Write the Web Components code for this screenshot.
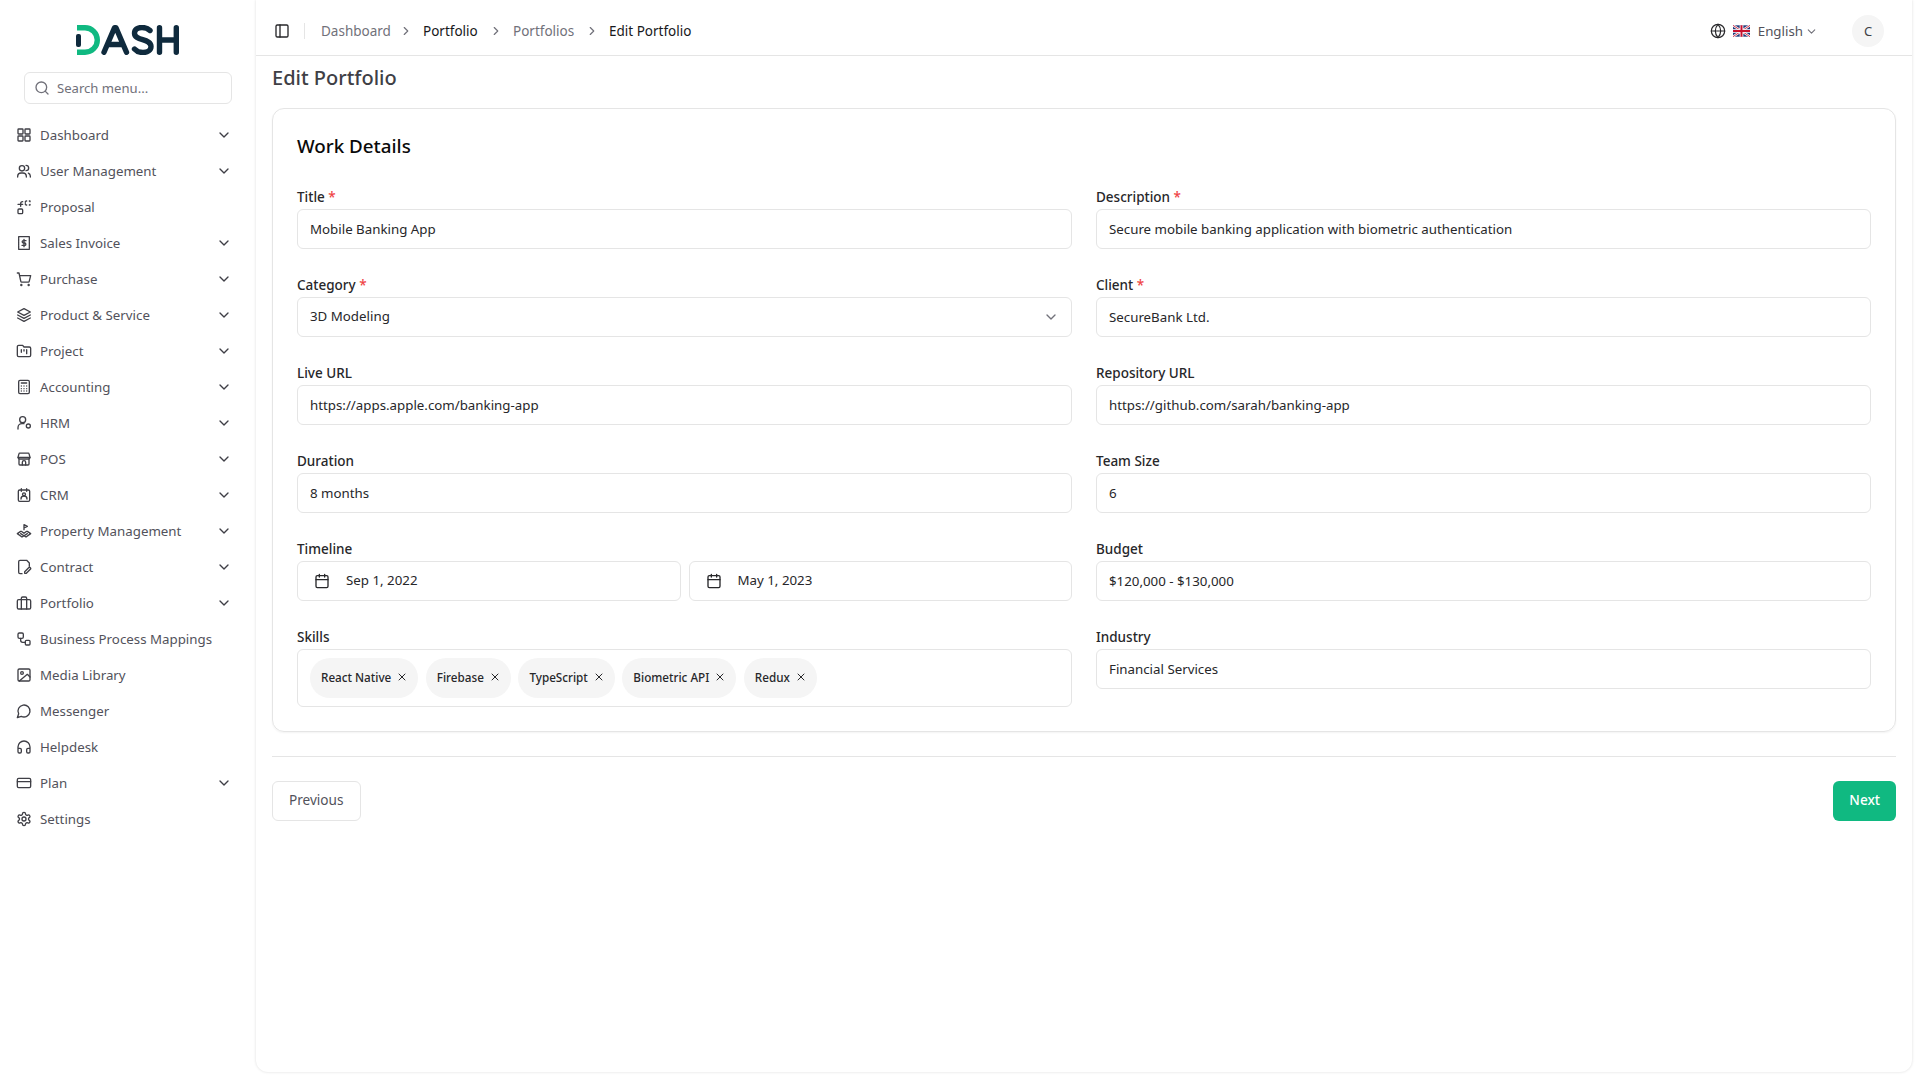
<!DOCTYPE html>
<html>
<head>
<meta charset="utf-8">
<title>Edit Portfolio</title>
<style>
  html, body { margin: 0; height: 100%; background: #fff; }
  body { font-family: "Noto Sans", "Open Sans", sans-serif; font-size: 13.3px; color: #0a0a0a; }
</style>
</head>
<body>
<app-shell>
  <side-bar slot="side"></side-bar>
  <top-bar slot="top"></top-bar>
  <edit-form></edit-form>
</app-shell>

<script>
const ICONS = {
  dashboard: '<rect x="3" y="3" width="7.5" height="7.5" rx="1"/><rect x="13.5" y="3" width="7.5" height="7.5" rx="1"/><rect x="3" y="13.5" width="7.5" height="7.5" rx="1"/><rect x="13.5" y="13.5" width="7.5" height="7.5" rx="1"/>',
  users: '<circle cx="9" cy="8" r="4"/><path d="M2.5 21v-1.5A5 5 0 0 1 7.5 15h3a5 5 0 0 1 5 4.5V21"/><path d="M15 3.5a4 4 0 0 1 0 8"/><path d="M21.5 21v-1.5a5 5 0 0 0-3-4.3"/>',
  proposal: '<rect x="3" y="15" width="7" height="7" rx="1.5"/><path d="M7 11V7a3 3 0 0 1 3-3"/><path d="M3 8h7"/><path d="M15 3h1M20 3h1v1M21 8v1h-1M15 9h1M14 4v1M14 7v1" />',
  invoice: '<path d="M4 2.5h16v19H4z" stroke-dasharray="1.5 .6"/><path d="M15 8.5h-4a1.7 1.7 0 0 0 0 3.5h2a1.7 1.7 0 0 1 0 3.5H9M12 6.5v11"/>',
  cart: '<circle cx="8" cy="21" r=".8"/><circle cx="19" cy="21" r=".8"/><path d="M2 3h2.5l2.7 12.5a1.5 1.5 0 0 0 1.5 1.2h9.6a1.5 1.5 0 0 0 1.5-1.2L22 7H5.5"/>',
  layers: '<path d="M12 2.5 2.5 7.5 12 12.5l9.5-5z"/><path d="m2.5 12 9.5 5 9.5-5"/><path d="m2.5 16.5 9.5 5 9.5-5"/>',
  project: '<path d="M20 20.5a2 2 0 0 0 2-2V8a2 2 0 0 0-2-2h-8L10 3.5H4a2 2 0 0 0-2 2v13a2 2 0 0 0 2 2z"/><path d="M8 10v4M12 10v2M16 10v6"/>',
  calc: '<rect x="4" y="2" width="16" height="20" rx="2"/><path d="M8 6h8M8 10.5h.01M12 10.5h.01M16 10.5h.01M8 14.5h.01M12 14.5h.01M16 14.5h.01M8 18h.01M12 18h.01M16 18h.01"/>',
  hrm: '<circle cx="10" cy="7" r="4.5"/><path d="M3 21v-2a6 6 0 0 1 6-6h3"/><circle cx="18.5" cy="16.5" r="3"/>',
  store: '<path d="M3 9.5 4.5 4a1 1 0 0 1 1-.8h13a1 1 0 0 1 1 .8L21 9.5a2.5 2.5 0 0 1-2.5 2.5h-13A2.5 2.5 0 0 1 3 9.5z"/><path d="M3 9.5h18M4.5 12v7.5a1.5 1.5 0 0 0 1.5 1.5h12a1.5 1.5 0 0 0 1.5-1.5V12"/><path d="M9.5 21v-4a2.500 2.500 0 0 1 5 0v4"/>',
  crm: '<rect x="3.5" y="4.5" width="17" height="17" rx="2"/><path d="M8 2.500v4M16 2.500v4"/><circle cx="12" cy="11" r="2.200"/><path d="M7.500 18a4.500 4.500 0 0 1 9 0"/>',
  property: '<path d="M12 10V2.500l5 2.500-5 2.500"/><path d="m7 12.500-5 3.500 7 5 3-2 3 2 7-5-5-3.500"/><path d="m7 16 5 3.200 5-3.200"/><path d="m8 12.500 4 3 4-3"/>',
  contract: '<path d="M20 11V6l-4-4H6a2 2 0 0 0-2 2v16a2 2 0 0 0 2 2h3"/><path d="M13 21.500v-2.500l6-6a1.700 1.700 0 0 1 2.500 2.500l-6 6z"/>',
  briefcase: '<rect x="2" y="7" width="20" height="14" rx="2"/><path d="M8 21V5a2 2 0 0 1 2-2h4a2 2 0 0 1 2 2v16"/>',
  mapping: '<rect x="3" y="3" width="8" height="8" rx="2"/><rect x="14" y="14" width="7" height="7" rx="1.500"/><path d="M7 11v3a3 3 0 0 0 3 3h4"/>',
  image: '<rect x="3" y="3" width="18" height="18" rx="2"/><circle cx="9" cy="9" r="2"/><path d="m21 15-4-4L5 21"/>',
  message: '<path d="M7.900 20A9 9 0 1 0 4 16.100L2 22z"/>',
  headset: '<path d="M3 14h3a2 2 0 0 1 2 2v3a2 2 0 0 1-2 2H5a2 2 0 0 1-2-2v-7a9 9 0 0 1 18 0v7a2 2 0 0 1-2 2h-1a2 2 0 0 1-2-2v-3a2 2 0 0 1 2-2h3"/>',
  card: '<rect x="2" y="5" width="20" height="14" rx="2"/><path d="M2 10h20"/>',
  gear: '<path d="M12.200 2h-.4a2 2 0 0 0-2 2v.2a2 2 0 0 1-1 1.700l-.4.300a2 2 0 0 1-2 0l-.2-.1a2 2 0 0 0-2.700.7l-.2.400a2 2 0 0 0 .7 2.700l.2.100a2 2 0 0 1 1 1.700v.5a2 2 0 0 1-1 1.800l-.2.100a2 2 0 0 0-.7 2.700l.2.400a2 2 0 0 0 2.700.7l.2-.1a2 2 0 0 1 2 0l.4.300a2 2 0 0 1 1 1.700v.2a2 2 0 0 0 2 2h.4a2 2 0 0 0 2-2v-.2a2 2 0 0 1 1-1.700l.4-.300a2 2 0 0 1 2 0l.2.100a2 2 0 0 0 2.700-.7l.2-.4a2 2 0 0 0-.7-2.700l-.2-.1a2 2 0 0 1-1-1.800v-.5a2 2 0 0 1 1-1.700l.2-.1a2 2 0 0 0 .7-2.700l-.2-.4a2 2 0 0 0-2.700-.7l-.2.100a2 2 0 0 1-2 0l-.4-.300a2 2 0 0 1-1-1.700V4a2 2 0 0 0-2-2z"/><circle cx="12" cy="12" r="3"/>',
  chevron: '<path d="m6 9 6 6 6-6"/>',
  search: '<circle cx="11" cy="11" r="8"/><path d="m21 21-4.300-4.300"/>',
  panel: '<rect x="3" y="3" width="18" height="18" rx="2"/><path d="M9 3v18"/>',
  globe: '<circle cx="12" cy="12" r="10"/><path d="M12 2a14.500 14.500 0 0 0 0 20 14.500 14.500 0 0 0 0-20"/><path d="M2 12h20"/>',
  calendar: '<path d="M8 2v4M16 2v4"/><rect x="3" y="4" width="18" height="18" rx="2"/><path d="M3 10h18"/>',
  x: '<path d="M18 6 6 18M6 6l12 12"/>',
  arrow: '<path d="m9 18 6-6-6-6"/>'
};

function icon(name, size, color, width) {
  return `<svg width="${size}" height="${size}" viewBox="0 0 24 24" fill="none" stroke="${color}" stroke-width="${width || 2}" stroke-linecap="round" stroke-linejoin="round">${ICONS[name]}</svg>`;
}

class AppShell extends HTMLElement {
  constructor() {
    super();
    this.attachShadow({ mode: "open" });
    this.shadowRoot.innerHTML = `
      <style>
        :host { display: flex; height: 100vh; overflow: hidden; background: #fff; }
        .side { width: 256px; flex: none; }
        .main { flex: 1; min-width: 0; margin: 0 8px 8px 0; border-radius: 0 0 12px 12px;
                box-shadow: 0 0 3px rgba(0,0,0,.14); display: flex; flex-direction: column; }
      </style>
      <div class="side"><slot name="side"></slot></div>
      <div class="main"><slot name="top"></slot><slot></slot></div>
    `;
  }
}

class SideBar extends HTMLElement {
  constructor() {
    super();
    this.attachShadow({ mode: "open" });
  }

  connectedCallback() {
    const items = [
      ["dashboard", "Dashboard", 1], ["users", "User Management", 1], ["proposal", "Proposal", 0],
      ["invoice", "Sales Invoice", 1], ["cart", "Purchase", 1], ["layers", "Product & Service", 1],
      ["project", "Project", 1], ["calc", "Accounting", 1], ["hrm", "HRM", 1], ["store", "POS", 1],
      ["crm", "CRM", 1], ["property", "Property Management", 1], ["contract", "Contract", 1],
      ["briefcase", "Portfolio", 1], ["mapping", "Business Process Mappings", 0], ["image", "Media Library", 0],
      ["message", "Messenger", 0], ["headset", "Helpdesk", 0], ["card", "Plan", 1], ["gear", "Settings", 0]
    ];
    const rows = items.map(([ic, label, more]) => `
      <div class="item">
        ${icon(ic, 16, "#3f3f46", 2)}
        <span>${label.replace("&", "&amp;")}</span>
        ${more ? `<i>${icon("chevron", 16, "#3f3f46", 2)}</i>` : ""}
      </div>`).join("");
    this.shadowRoot.innerHTML = `
      <style>
        :host { display: block; height: 100%; }
        .logo { height: 30px; margin-top: 25px; padding-left: 76px; }
        .logo svg { display: block; }
        .search { margin: 17px 24px 0; height: 32px; box-sizing: border-box; border: 1px solid #e5e5e5; border-radius: 6px; display: flex;
                  align-items: center; gap: 7px; padding: 0 9px 1px; color: #71717a; font-size: 13.1px; }
        nav { margin-top: 13px; padding: 0 16px; }
        .item { height: 36px; display: flex; align-items: center; gap: 8px; color: #52525b; font-size: 13.3px; padding-right: 8px; }
        .item span { flex: 1; white-space: nowrap; padding-bottom: 1px; }
        .item i { display: flex; }
      </style>
      <div class="logo">
        <svg width="103" height="30" viewBox="0 0 103 30" fill="none">
          <path d="M1 2.700H9a12.300 12.300 0 0 1 0 24.600H1" stroke="#10b981" stroke-width="5.400"/>
          <rect x="0" y="9" width="5" height="13" rx="2" fill="#0f2a3d"/>
          <path d="M28 27.300 38.500 2.700h1.500L50.500 27.300M32.500 19.500h13.500" stroke="#0f2a3d" stroke-width="5.400" stroke-linecap="round" stroke-linejoin="round"/>
          <path d="M74 5.500c-2-2-4.800-3-8-3-4.500 0-7.500 2-7.500 5.700 0 8 16.500 5 16.500 13.300 0 3.800-3.500 6-8 6-3.500 0-6.500-1.200-8.500-3.500" stroke="#0f2a3d" stroke-width="5.400" stroke-linecap="round"/>
          <path d="M83.500 2.700V27.300M100.300 2.700V27.300M83.500 15h16.800" stroke="#0f2a3d" stroke-width="5.400" stroke-linecap="round"/>
        </svg>
      </div>
      <div class="search">${icon("search", 16, "#71717a", 2)}<span>Search menu...</span></div>
      <nav>${rows}</nav>
    `;
  }
}

class TopBar extends HTMLElement {
  constructor() {
    super();
    this.attachShadow({ mode: "open" });
  }

  connectedCallback() {
    const sep = icon("arrow", 14, "#71717a", 2);
    this.shadowRoot.innerHTML = `
      <style>
        :host { display: flex; flex: none; align-items: center; box-sizing: border-box; height: 56px; border-bottom: 1px solid #e5e5e5; padding: 7px 28px 0 18px; }
        .pane { display: flex; padding-right: 14px; margin-right: 16px; border-right: 1px solid #e5e5e5; height: 16px; align-items: center; }
        .crumbs { display: flex; align-items: center; gap: 10.5px; flex: 1; font-size: 13.5px; }
        .crumbs span { white-space: nowrap; }
        .muted { color: #71717a; }
        .dark { color: #18181b; }
        .lang { display: flex; align-items: center; color: #52525b; font-size: 13.3px; }
        .flag { margin: 0 8px 0 7px; display: flex; }
        .caret { display: flex; margin-left: 2px; }
        .avatar { width: 32px; height: 32px; border-radius: 50%; background: #f5f5f5; margin-left: 34px; display: flex;
                  align-items: center; justify-content: center; font-size: 13px; color: #3f3f46; }
      </style>
      <div class="pane">${icon("panel", 16, "#27272a", 2)}</div>
      <div class="crumbs">
        <span class="muted" style="width:67px">Dashboard</span>${sep}
        <span class="dark" style="width:55px">Portfolio</span>${sep}
        <span class="muted" style="width:61px">Portfolios</span>${sep}
        <span class="dark">Edit Portfolio</span>
      </div>
      <div class="lang">
        ${icon("globe", 16, "#27272a", 1.8)}
        <span class="flag">
          <svg width="17" height="12" viewBox="0 0 60 40">
            <rect width="60" height="40" fill="#1f3a7a"/>
            <path d="M0 0 60 40M60 0 0 40" stroke="#fff" stroke-width="8"/>
            <path d="M0 0 60 40M60 0 0 40" stroke="#c8102e" stroke-width="3"/>
            <path d="M30 0v40M0 20h60" stroke="#fff" stroke-width="13"/>
            <path d="M30 0v40M0 20h60" stroke="#c8102e" stroke-width="7"/>
          </svg>
        </span>
        <span>English</span>
        <span class="caret">${icon("chevron", 13, "#71717a", 2)}</span>
      </div>
      <div class="avatar">C</div>
    `;
  }
}

class FormField extends HTMLElement {
  constructor() {
    super();
    this.attachShadow({ mode: "open" });
  }

  connectedCallback() {
    const label = this.getAttribute("label");
    const req = this.hasAttribute("required") ? ' <b>*</b>' : "";
    this.shadowRoot.innerHTML = `
      <style>
        :host { display: block; }
        label { display: block; height: 20px; line-height: 20px; font-size: 13.5px; font-weight: 500; color: #27272a; margin-bottom: 2px; }
        b { color: #ef4444; font-weight: 500; }
      </style>
      <label>${label}${req}</label>
      <slot></slot>
    `;
  }
}

class TextBox extends HTMLElement {
  constructor() {
    super();
    this.attachShadow({ mode: "open" });
  }

  connectedCallback() {
    const type = this.getAttribute("type");
    const before = type === "date" ? `<span class="cal">${icon("calendar", 16, "#27272a", 2)}</span>` : "";
    const after = type === "select" ? `<i>${icon("chevron", 16, "#71717a", 2)}</i>` : "";
    this.shadowRoot.innerHTML = `
      <style>
        :host { display: flex; align-items: center; box-sizing: border-box; height: 40px; border: 1px solid #e5e5e5;
                border-radius: 6px; padding: 0 12px; font-size: 13.3px; color: #27272a; background: #fff; min-width: 0; }
        span.t { flex: 1; white-space: nowrap; padding-bottom: 1px; }
        :host([type]) span.t { padding-bottom: 2px; }
        .cal { display: flex; margin: 0 16px 0 4px; }
        i { display: flex; }
      </style>
      ${before}<span class="t"><slot></slot></span>${after}
    `;
  }
}

class SkillTag extends HTMLElement {
  constructor() {
    super();
    this.attachShadow({ mode: "open" });
    this.shadowRoot.innerHTML = `
      <style>
        :host { display: inline-flex; align-items: center; gap: 5px; height: 40px; box-sizing: border-box; padding: 0 10px 2px 11px; border-radius: 20px;
                background: #f5f5f5; font-size: 11.7px; font-weight: 500; color: #27272a; white-space: nowrap; }
        svg { display: block; }
      </style>
      <slot></slot>${icon("x", 12, "#27272a", 2)}
    `;
  }
}

class EditForm extends HTMLElement {
  constructor() {
    super();
    this.attachShadow({ mode: "open" });
    this.shadowRoot.innerHTML = `
      <style>
        :host { display: block; padding: 10px 16px 0; }
        h1 { margin: 0; height: 22px; line-height: 23px; font-size: 20px; font-weight: 500; color: #3f3f46; }
        .card { margin-top: 20px; border: 1px solid #e5e5e5; border-radius: 12px; padding: 24px; box-shadow: 0 1px 2px rgba(0,0,0,.05); }
        h2 { margin: 0 0 26px; height: 28px; line-height: 27px; font-size: 18.8px; font-weight: 500; color: #0a0a0a; }
        .grid { display: grid; grid-template-columns: 1fr 1fr; column-gap: 24px; row-gap: 26px; align-items: start; }
        .dates { display: grid; grid-template-columns: 1fr 1fr; gap: 8px; }
        .tags { display: flex; gap: 7.5px; align-items: center; border: 1px solid #e5e5e5; border-radius: 6px; padding: 8px 12px; height: 58px; box-sizing: border-box; }
        hr { border: 0; border-top: 1px solid #e5e5e5; margin: 24px 0; }
        .actions { display: flex; justify-content: space-between; }
        .btn { height: 40px; box-sizing: border-box; display: flex; align-items: center; padding: 0 16px 3px; border-radius: 6px; font-size: 13.6px; }
        .prev { border: 1px solid #e5e5e5; color: #52525b; }
        .next { background: #10b981; color: #fff; font-weight: 500; }
      </style>
      <h1>Edit Portfolio</h1>
      <div class="card">
        <h2>Work Details</h2>
        <div class="grid">
          <form-field label="Title" required><text-box>Mobile Banking App</text-box></form-field>
          <form-field label="Description" required><text-box>Secure mobile banking application with biometric authentication</text-box></form-field>
          <form-field label="Category" required><text-box type="select">3D Modeling</text-box></form-field>
          <form-field label="Client" required><text-box>SecureBank Ltd.</text-box></form-field>
          <form-field label="Live URL"><text-box>https://apps.apple.com/banking-app</text-box></form-field>
          <form-field label="Repository URL"><text-box>https://github.com/sarah/banking-app</text-box></form-field>
          <form-field label="Duration"><text-box>8 months</text-box></form-field>
          <form-field label="Team Size"><text-box>6</text-box></form-field>
          <form-field label="Timeline">
            <div class="dates"><text-box type="date">Sep 1, 2022</text-box><text-box type="date">May 1, 2023</text-box></div>
          </form-field>
          <form-field label="Budget"><text-box>$120,000 - $130,000</text-box></form-field>
          <form-field label="Skills">
            <div class="tags">
              <skill-tag>React Native</skill-tag><skill-tag>Firebase</skill-tag><skill-tag>TypeScript</skill-tag><skill-tag>Biometric API</skill-tag><skill-tag>Redux</skill-tag>
            </div>
          </form-field>
          <form-field label="Industry"><text-box>Financial Services</text-box></form-field>
        </div>
      </div>
      <hr>
      <div class="actions"><div class="btn prev">Previous</div><div class="btn next">Next</div></div>
    `;
  }
}

customElements.define("app-shell", AppShell);
customElements.define("side-bar", SideBar);
customElements.define("top-bar", TopBar);
customElements.define("form-field", FormField);
customElements.define("text-box", TextBox);
customElements.define("skill-tag", SkillTag);
customElements.define("edit-form", EditForm);
</script>
</body>
</html>
